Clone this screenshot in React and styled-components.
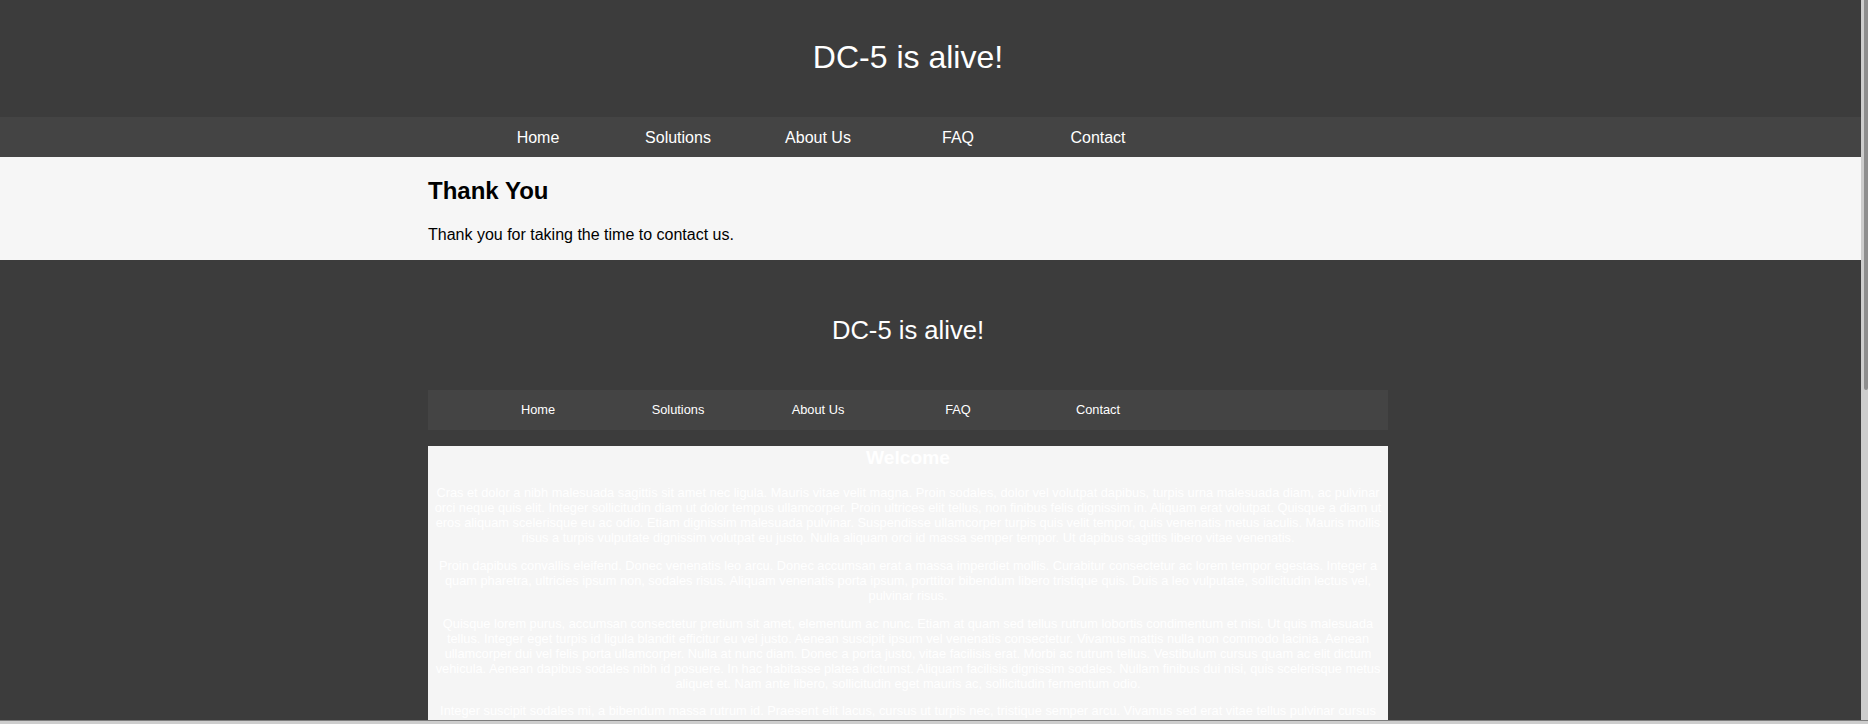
import React from 'react';
import styled, { createGlobalStyle } from 'styled-components';

const GlobalStyle = createGlobalStyle`
    body {
        margin: 0;
        background: #3c3c3c;
        font-family: "Liberation Sans", Arial, sans-serif;
        font-size: 16px;
    }
`;

const links = ['Home', 'Solutions', 'About Us', 'FAQ', 'Contact'];

const paragraphs = [
    'Cras et dolor a nibh malesuada sagittis sit amet nec ligula. Mauris vitae velit magna. Proin sodales, dolor vel volutpat dapibus, turpis urna malesuada diam, ac pulvinar orci neque quis elit. Integer sollicitudin diam ut dolor tempus ullamcorper. Proin ultrices elit tellus, non finibus felis dignissim in. Aliquam erat volutpat. Quisque a diam ut eros aliquam scelerisque eu ac odio. Etiam dignissim malesuada pulvinar. Suspendisse ullamcorper turpis quis velit tempor, quis venenatis metus iaculis. Mauris mollis risus a turpis vulputate dignissim volutpat eu justo. Nulla aliquam orci id massa semper tempor. Ut dapibus sagittis libero vitae venenatis.',
    'Proin dapibus convallis eleifend. Donec venenatis leo arcu. Donec accumsan erat a massa imperdiet mollis. Curabitur consectetur ac lorem tempor egestas. Integer a quam pharetra, ultricies ipsum non, sodales risus. Aliquam venenatis porta ipsum, porttitor bibendum libero tristique quis. Duis a leo vulputate, sollicitudin lectus vel, pulvinar risus.',
    'Quisque lorem purus, accumsan consectetur pretium sit amet, elementum ac nunc. Etiam at quam sed tellus rutrum lobortis condimentum et nisi. Ut quis malesuada tellus. Integer eget turpis id ligula blandit efficitur eu vel justo. Aenean suscipit ipsum vel venenatis consectetur. Vivamus mattis nulla non commodo lacinia. Aenean ullamcorper dui vel felis porta ullamcorper. Nulla at nunc diam. Donec a porta justo, vitae facilisis erat. Morbi ac rutrum tellus. Vestibulum cursus quam ac elit dictum vehicula. Aenean dapibus sodales nibh id posuere. In hac habitasse platea dictumst. Aliquam facilisis dignissim sodales. Nullam finibus dui nisi, quis scelerisque metus aliquet et. Nam ante libero, sollicitudin eget mauris ac, sollicitudin fermentum odio.',
    'Integer suscipit sodales mi, a bibendum massa rutrum id. Praesent elit lacus, cursus ut turpis nec, tristique semper arcu. Vivamus sed erat vitae tellus pulvinar cursus at non magna. Sed ut lectus id lorem faucibus luctus. Fusce a nisl eget orci ultricies efficitur. Morbi in elit vitae sapien volutpat pretium vel non nulla. Nullam a mi a ante sagittis pharetra sit amet ac odio.',
    'Suspendisse potenti. Nam vel ligula in sapien egestas tincidunt. Curabitur eu mi sed nibh vulputate fringilla. Phasellus tempor purus a erat convallis, sed hendrerit mauris pharetra. Etiam porta risus eget dui tincidunt, id posuere sem ultrices. Donec malesuada, magna sed pretium dignissim, nibh metus imperdiet ipsum, in dapibus leo libero id diam. Cras vitae maximus neque.',
    'Maecenas efficitur diam vitae lacus tristique, non ullamcorper justo feugiat. Pellentesque habitant morbi tristique senectus et netus et malesuada fames ac turpis egestas. Vestibulum sit amet velit nec libero consequat semper. Aliquam erat volutpat. Integer consequat sem quis augue euismod, a dictum turpis finibus. Nunc auctor justo nec sem pellentesque, vel feugiat ligula hendrerit.',
    'Fusce vel arcu at nisl congue aliquet. In hac habitasse platea dictumst. Curabitur rhoncus nunc et metus tincidunt, id eleifend quam dignissim. Duis scelerisque libero sit amet arcu lacinia, a vehicula nisl consequat. Praesent fermentum tellus eu nunc posuere, eget laoreet magna rutrum. Quisque vitae augue non mi sollicitudin commodo sed sit amet massa.',
    'Vivamus sagittis eros sed purus placerat, eget faucibus nisi porta. Sed eu dolor vitae velit fringilla rhoncus. Donec sit amet orci vel quam tempor ultricies. Mauris convallis nisl ac nibh aliquam, in aliquet nunc aliquam. Etiam sed arcu eu ipsum interdum vulputate. Morbi vestibulum sapien in ligula dictum, non luctus neque facilisis.',
];

const Page = () => {
    return (
        <>
            <GlobalStyle />
            <Masthead>
                <Wrap>
                    <SiteTitle>DC-5 is alive!</SiteTitle>
                </Wrap>
            </Masthead>
            <NavBand>
                <Wrap>
                    <NavList>
                        {links.map((l) => (
                            <NavItem key={l}>
                                <NavLink href="#">{l}</NavLink>
                            </NavItem>
                        ))}
                    </NavList>
                </Wrap>
            </NavBand>
            <MainBand>
                <Wrap>
                    <Heading>Thank You</Heading>
                    <Text>Thank you for taking the time to contact us.</Text>
                </Wrap>
            </MainBand>
            <Footer>
                <Wrap>
                    <SiteTitle $small>DC-5 is alive!</SiteTitle>
                    <NavBox>
                        <NavList>
                            {links.map((l) => (
                                <NavItem key={l} $small>
                                    <NavLink href="#">{l}</NavLink>
                                </NavItem>
                            ))}
                        </NavList>
                    </NavBox>
                    <WelcomeBox>
                        <WelcomeTitle>Welcome</WelcomeTitle>
                        {paragraphs.map((p, i) => (
                            <WelcomePara key={i}>{p}</WelcomePara>
                        ))}
                    </WelcomeBox>
                </Wrap>
            </Footer>
            {/* browser scrollbars, drawn over the page edge */}
            <ScrollTrack>
                <ScrollThumb />
            </ScrollTrack>
            <ScrollBottom />
        </>
    );
};

const Wrap = styled.div`
    width: 960px;
    margin-left: 428px;
`;

const Masthead = styled.header`
    background: #3c3c3c;
    height: 117px;
    box-sizing: border-box;
    padding-top: 39px;
`;

const SiteTitle = styled.h1`
    margin: 0;
    color: #ffffff;
    font-weight: normal;
    text-align: center;
    font-size: ${(p) => (p.$small ? '25.6px' : '32px')};
    margin-bottom: ${(p) => (p.$small ? '45px' : '0')};
`;

const NavBand = styled.nav`
    background: #444444;
    height: 40px;
`;

const NavBox = styled.nav`
    background: #444444;
    height: 40px;
    margin-bottom: 16px;
`;

const NavList = styled.ul`
    display: flex;
    margin: 0;
    padding: 0 0 0 40px;
    list-style: none;
`;

const NavItem = styled.li`
    width: 140px;
    text-align: center;
    padding-top: 12px;
    font-size: ${(p) => (p.$small ? '12.8px' : '16px')};
`;

const NavLink = styled.a`
    color: #ffffff;
    text-decoration: none;
`;

const MainBand = styled.main`
    background: #f6f6f6;
    padding: 20px 0 16px;
`;

const Heading = styled.h2`
    margin: 0 0 21px;
    font-size: 24px;
    font-weight: bold;
    color: #000000;
`;

const Text = styled.p`
    margin: 0;
    font-size: 16px;
    color: #000000;
`;

const Footer = styled.footer`
    background: #3c3c3c;
    padding: 56px 0 30px;
`;

const WelcomeBox = styled.section`
    background: #f5f5f5;
    padding: 1px 6px 1px;
    text-align: center;
    color: #ffffff;
    font-size: 12.8px;
`;

const WelcomeTitle = styled.h2`
    margin: 0 0 16px;
    font-size: 19.2px;
    font-weight: bold;
`;

const WelcomePara = styled.p`
    margin: 0 0 12.8px;
`;

const ScrollTrack = styled.div`
    position: fixed;
    top: 0;
    right: 0;
    bottom: 3px;
    width: 7px;
    background: #cdcdcd;
    display: flex;
    justify-content: flex-end;
`;

const ScrollThumb = styled.div`
    width: 4px;
    height: 390px;
    background: #8e8e8e;
    border-radius: 0 0 3px 3px;
`;

const ScrollBottom = styled.div`
    position: fixed;
    left: 0;
    right: 0;
    bottom: 0;
    height: 3px;
    background: #cdcdcd;
    border-top: 1px solid #7c7c7c;
`;

export default Page;
